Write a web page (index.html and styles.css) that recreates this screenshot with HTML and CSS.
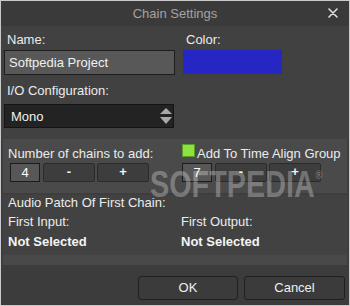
FILE: index.html
```html
<!DOCTYPE html>
<html>
<head>
  <meta name="viewport" content="width=device-width, initial-scale=1">
  <link rel="stylesheet" href="styles.css">
</head>
<body>
  <div class="window">
    <div class="titlebar">
      <span class="title">Chain Settings</span>
      <svg class="close" width="10" height="10" viewBox="0 0 10 10">
        <path d="M1 1 L9 9 M9 1 L1 9" stroke="#e0e0e0" stroke-width="1.6" stroke-linecap="round"/>
      </svg>
    </div>

    <div class="form">
      <div class="field">
        <div class="label">Name:</div>
        <div class="text-input">Softpedia Project</div>
      </div>
      <div class="field">
        <div class="label">Color:</div>
        <div class="swatch"></div>
      </div>
    </div>

    <div class="io">
      <div class="label">I/O Configuration:</div>
      <div class="select">
        <span>Mono</span>
        <svg width="12" height="17" viewBox="0 0 12 17">
          <polygon points="0,6 6,0 12,6" fill="#a9a9a9"/>
          <polygon points="0,9 6,16 12,9" fill="#a9a9a9"/>
        </svg>
      </div>
    </div>

    <div class="chains">
      <div class="col">
        <div class="row-label">Number of chains to add:</div>
        <div class="stepper left">
          <span class="value">4</span>
          <span class="btn">-</span>
          <span class="btn">+</span>
        </div>
      </div>
      <div class="col">
        <div class="row-label"><span class="checkbox"></span>Add To Time Align Group</div>
        <div class="stepper">
          <span class="value">7</span>
          <span class="btn">-</span>
          <span class="btn">+</span>
        </div>
      </div>
    </div>

    <div class="patch">
      <div class="patch-title">Audio Patch Of First Chain:</div>
      <div class="patch-cols">
        <div>
          <div class="patch-label">First Input:</div>
          <div class="patch-value">Not Selected</div>
        </div>
        <div>
          <div class="patch-label">First Output:</div>
          <div class="patch-value">Not Selected</div>
        </div>
      </div>
    </div>

    <div class="strip"></div>

    <div class="footer">
      <span class="button ok">OK</span>
      <span class="button cancel">Cancel</span>
    </div>

    <div class="watermark">SOFTPEDIA<span class="reg">®</span></div>
  </div>
</body>
</html>
```

FILE: styles.css
```css
body {
  margin: 0;
  padding: 0;
  background-color: #c9c9c9;
  font-family: "Liberation Sans", Arial, sans-serif;
  font-size: 13px;
  color: #ececec;
}
.window {
  position: relative;
  width: 350px;
  height: 306px;
  box-sizing: border-box;
  border: 1px solid #c9c9c9;
  background-color: #3e3e3e;
  overflow: hidden;
}
.titlebar {
  display: grid;
  grid-template-columns: 1fr auto 1fr;
  align-items: center;
  height: 25px;
  background-color: #3a3a3a;
}
.title {
  grid-column: 2;
  color: #a3a3a3;
  line-height: 15px;
}
.close {
  grid-column: 3;
  justify-self: end;
  margin-right: 11px;
  margin-top: -2px;
}
.label {
  line-height: 15px;
  padding-left: 3px;
}
.form {
  display: grid;
  grid-template-columns: 171px 99px;
  column-gap: 8px;
  padding: 6px 0 0 3px;
  background-color: #414141;
}
.form .label {
  margin-bottom: 3px;
}
.text-input {
  height: 25px;
  box-sizing: border-box;
  border: 1px solid #1e1e1e;
  background-color: #585858;
  padding-left: 4px;
  line-height: 23px;
  color: #f0f0f0;
}
.swatch {
  height: 24px;
  background-color: #2626c4;
}
.io {
  padding: 8px 0 11px 3px;
  background-color: #414141;
}
.io .label {
  margin-bottom: 6px;
}
.select {
  display: flex;
  align-items: center;
  justify-content: space-between;
  width: 170px;
  height: 24px;
  box-sizing: border-box;
  border: 1px solid #141414;
  background-color: #232323;
  padding: 0 1px 0 6px;
  color: #f0f0f0;
}
.chains {
  display: grid;
  grid-template-columns: 174px 1fr;
  height: 54px;
  box-sizing: border-box;
  margin: 0 2px;
  padding: 7px 0 0 5px;
  background-color: #4a4a4a;
}
.row-label {
  display: flex;
  line-height: 15px;
  white-space: nowrap;
}
.checkbox {
  width: 13px;
  height: 13px;
  box-sizing: border-box;
  margin: -2px 2px 0 0;
  background-color: #8ee23e;
  border: 1px solid #5d9a2c;
}
.stepper {
  display: flex;
  margin-top: 2px;
}
.stepper.left {
  margin-left: 2px;
}
.value {
  width: 30px;
  height: 19px;
  box-sizing: border-box;
  border: 1px solid #1c1c1c;
  background-color: #575757;
  text-align: center;
  line-height: 17px;
  color: #fff;
  margin-right: 3px;
}
.btn {
  width: 52px;
  height: 19px;
  box-sizing: border-box;
  border: 1px solid #2b2b2b;
  border-radius: 2px;
  background-color: #3d3d3d;
  text-align: center;
  line-height: 16px;
  font-weight: bold;
  color: #f2f2f2;
  margin-right: 2px;
}
.patch {
  height: 60px;
  box-sizing: border-box;
  margin: 2px 2px 0;
  padding-left: 5px;
  background-color: #424242;
}
.patch-title,
.patch-label,
.patch-value {
  line-height: 15px;
}
.patch-title {
  margin-bottom: 4px;
}
.patch-label {
  margin-bottom: 5px;
}
.patch-value {
  font-weight: bold;
  color: #f4f4f4;
}
.patch-cols {
  display: grid;
  grid-template-columns: 173px 1fr;
}
.strip {
  height: 10px;
  margin: 0 2px;
  background-color: #494949;
}
.footer {
  display: flex;
  justify-content: flex-end;
  gap: 6px;
  height: 40px;
  box-sizing: border-box;
  padding: 11px 4px 0 0;
  background-color: #3c3c3c;
}
.button {
  height: 24px;
  box-sizing: border-box;
  border: 1px solid #1f1f1f;
  border-radius: 3px;
  background-color: #3b3b3b;
  text-align: center;
  line-height: 22px;
  color: #efefef;
}
.ok {
  width: 100px;
}
.cancel {
  width: 101px;
}
/* watermark sits over the dialog */
.watermark {
  position: absolute;
  left: 149px;
  top: 154px;
  font-size: 36px;
  font-weight: bold;
  line-height: 40px;
  color: rgba(255, 255, 255, 0.28);
  transform: scaleX(0.8);
  transform-origin: left top;
  pointer-events: none;
}
.watermark .reg {
  font-size: 12px;
  vertical-align: 18px;
  margin-left: 1px;
}
```
